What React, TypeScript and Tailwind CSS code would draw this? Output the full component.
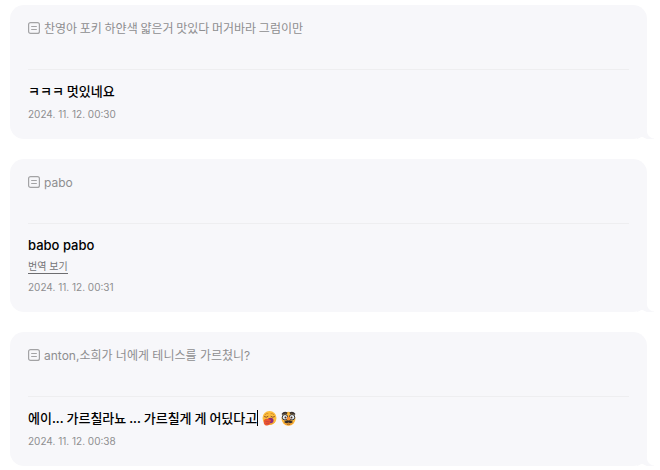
import React from "react";
import clsx from "clsx";

interface Message {
  id: number;
  quote: string;
  text: string;
  time: string;
  latinQuote?: boolean;
  latinText?: boolean;
  translatable?: boolean;
  typing?: boolean;
}

const messages: Message[] = [
  {
    id: 1,
    quote: "찬영아 포키 하얀색 얇은거 맛있다 머거바라 그럼이만",
    text: "ㅋㅋㅋ 멋있네요",
    time: "2024. 11. 12. 00:30",
  },
  {
    id: 2,
    quote: "pabo",
    text: "babo pabo",
    time: "2024. 11. 12. 00:31",
    latinQuote: true,
    latinText: true,
    translatable: true,
  },
  {
    id: 3,
    quote: "anton,소희가 너에게 테니스를 가르쳤니?",
    text: "에이... 가르칠라뇨 ... 가르칠게 게 어딨다고",
    time: "2024. 11. 12. 00:38",
    latinQuote: true,
    typing: true,
  },
];

const latinFont = "font-['Inter','Noto_Sans_CJK_KR',sans-serif]";
const koreanFont = "font-['Noto_Sans_CJK_KR',sans-serif]";

const NoteIcon = () => (
  <svg className="h-3 w-3 shrink-0" viewBox="0 0 12 12" fill="none" stroke="#a3a3a5" aria-hidden="true">
    <rect x="0.6" y="0.6" width="10.8" height="10.8" rx="2" strokeWidth="1.2" />
    <path d="M3.2 4.5h5.6M3.2 7.5h5.6" />
  </svg>
);

const YawningFace = () => (
  <svg className="h-[15px] w-[15px] shrink-0" viewBox="0 0 30 30" role="img" aria-label="yawning face">
    <circle cx="15" cy="14" r="14" fill="#fdbd3d" />
    <path d="M4 22a14 14 0 0 0 23-1c-6 4-15 5-23 1z" fill="#f2a12e" />
    <path d="M6 7.5q3-3.5 6-2.5M18 5q4-.5 6 2.5" fill="none" stroke="#c98224" strokeWidth="1.5" strokeLinecap="round" />
    <path d="M5 11.5q4 2.500 7-.5M18 11q3 3 7 .5" fill="none" stroke="#7d4a26" strokeWidth="1.800" strokeLinecap="round" />
    <ellipse cx="17" cy="19" rx="6" ry="5.500" fill="#8e2d7c" />
    <path d="M4 18c3-3 7-3 11-1 3 1 4 3 2 4l-1 1c1 4-2 7-6 7-5 0-8-4-6-11z" fill="#e9562f" />
    <path d="M8 21l7 .5M9 25l5-.5" stroke="#c83d42" strokeWidth="1.500" strokeLinecap="round" />
  </svg>
);

const DisguisedFace = () => (
  <svg className="h-[15px] w-[15px] shrink-0" viewBox="0 0 30 30" role="img" aria-label="disguised face">
    <circle cx="15" cy="15.500" r="14" fill="#fdb83c" />
    <path d="M4 23a14 14 0 0 0 22 0q-11 5-22 0z" fill="#f29d2e" />
    <path d="M1 6Q6-1 13 3l-1 3Q7 4 3 8zM29 6q-5-7-12-3l1 3q5-2 9 2z" fill="#37302f" />
    <circle cx="8" cy="12.500" r="5.500" fill="#e5eef2" stroke="#33333b" strokeWidth="2" />
    <circle cx="22" cy="12.500" r="5.500" fill="#e5eef2" stroke="#33333b" strokeWidth="2" />
    <circle cx="9" cy="13" r="2" fill="#4a2c25" />
    <circle cx="21" cy="13" r="2" fill="#4a2c25" />
    <path d="M13 11h4l2 6q-4 4-8 0z" fill="#f59134" />
    <path d="M15 19q4-1 6 1l3 2q-4 4-9 1-5 3-9-1l3-2q2-2 6-1z" fill="#332b2c" />
    <path d="M12 26.500q3-1 6 0" fill="none" stroke="#7a4220" strokeWidth="1.500" />
  </svg>
);

const BubbleTail = () => (
  <svg className="absolute -right-2 bottom-0 h-3 w-[18px]" viewBox="0 0 18 12" aria-hidden="true">
    <path d="M10 0v4c0 4 3 7 7 7.500v.5H0V0z" fill="#f7f7fa" />
    <path d="M0 12c2-.3 3-2 5-2s3 1.700 5 2z" fill="#fff" />
  </svg>
);

const MessageCard: React.FC<{ message: Message }> = ({ message }) => (
  <article className="relative rounded-[14px] bg-[#f7f7fa] px-[18px] pt-[13px] pb-[17px]">
    <div className="flex h-5 items-center gap-1 text-[12px] leading-5 text-[#8e8e90]">
      <NoteIcon />
      <p className={clsx("whitespace-nowrap", message.latinQuote ? `${latinFont} pt-0.5` : koreanFont)}>
        {message.quote}
      </p>
    </div>

    <hr className="mt-[31px] border-[#eeeef0]" />

    <div className="mt-[11px] flex h-5 items-center text-[13px] leading-5 font-medium text-black">
      <p className={clsx("whitespace-nowrap", message.latinText ? latinFont : koreanFont)}>{message.text}</p>
      {message.typing && (
        <>
          <span className="h-4 w-px bg-black" />
          <span className="ml-1 flex gap-1">
            <YawningFace />
            <DisguisedFace />
          </span>
        </>
      )}
    </div>

    {message.translatable && (
      <button
        type="button"
        className="mt-1 block border-b border-[#6d6d70] text-[10px] leading-[14px] text-[#737375]"
      >
        번역 보기
      </button>
    )}

    <time className="mt-[5px] block text-[10px] leading-4 text-[#8e8e90]">{message.time}</time>
    <BubbleTail />
  </article>
);

export default function App() {
  return (
    <main className="flex flex-col gap-5 bg-white pt-[5px] pr-[13px] pb-1 pl-[10px] font-['Inter','Noto_Sans_CJK_KR',sans-serif]">
      {messages.map((message) => (
        <MessageCard key={message.id} message={message} />
      ))}
    </main>
  );
}
